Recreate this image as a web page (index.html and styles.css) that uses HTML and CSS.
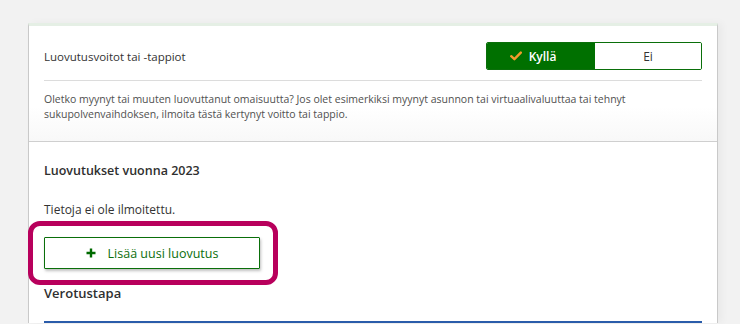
FILE: index.html
```html
<!DOCTYPE html>
<html lang="fi">
<head>
<meta charset="utf-8">
<title>Luovutusvoitot</title>
<link rel="stylesheet" href="styles.css">
</head>
<body>
<div class="card">
  <section class="intro">
    <div class="head-row">
      <span class="title">Luovutusvoitot tai -tappiot</span>
      <div class="toggle">
        <button class="seg seg-on"><svg class="check" width="12" height="10" viewBox="0 0 12 10"><path d="M1.2 5.2 L4.4 8.2 L10.8 1.6" fill="none" stroke="#f39a2c" stroke-width="2.4" stroke-linecap="round" stroke-linejoin="round"/></svg>Kyllä</button>
        <button class="seg seg-off">Ei</button>
      </div>
    </div>
    <p class="desc">Oletko myynyt tai muuten luovuttanut omaisuutta? Jos olet esimerkiksi myynyt asunnon tai virtuaalivaluuttaa tai tehnyt sukupolvenvaihdoksen, ilmoita tästä kertynyt voitto tai tappio.</p>
  </section>
  <section class="list">
    <h2 class="sub">Luovutukset vuonna 2023</h2>
    <p class="empty">Tietoja ei ole ilmoitettu.</p>
    <div class="add-wrap">
      <button class="add"><svg class="plus" width="10" height="10" viewBox="0 0 10 10"><path d="M5 0.5 V9.5 M0.5 5 H9.5" stroke="#006a00" stroke-width="2.4"/></svg>Lisää uusi luovutus</button>
    </div>
    <h2 class="sub sub2">Verotustapa</h2>
    <div class="blue-line"></div>
  </section>
</div>
</body>
</html>
```
FILE: styles.css
```css
html, body {
  margin: 0;
  padding: 0;
  background: #f2f2f2;
  font-family: "Open Sans", "Noto Sans", Arial, sans-serif;
  color: #2b2b2b;
  height: 324px;
  overflow: hidden;
}
.card {
  margin: 23px 0 0 28px;
  width: 690px;
  box-sizing: border-box;
  background: #fff;
  border-left: 1px solid #c9c9c9;
  border-right: 1px solid #c9c9c9;
  border-top: 3px solid #e5efe5;
  box-shadow: 4px 0 8px rgba(0,0,0,0.04);
}
.intro {
  padding: 16px 15px 19px;
  border-bottom: 1px solid #cfcfcf;
  background: linear-gradient(to bottom, #fff 70%, #f8f8f8 100%);
}
.head-row {
  display: flex;
  align-items: center;
  justify-content: space-between;
  padding-bottom: 10px;
  border-bottom: 1px solid #dcdcdc;
}
.title {
  font-size: 11.5px;
  color: #333;
}
.toggle {
  display: flex;
  width: 216px;
  height: 28px;
  border: 1px solid #0a6f0a;
  border-radius: 2px;
  box-sizing: border-box;
  overflow: hidden;
}
.seg {
  flex: 1;
  border: 0;
  margin: 0;
  padding: 0;
  font-family: inherit;
  font-size: 12px;
  display: flex;
  align-items: center;
  justify-content: center;
  gap: 7px;
}
.seg-on {
  background: #007000;
  color: #fff;
  font-weight: 600;
  flex: 0 0 108px;
  padding-right: 16px;
}
.seg-off {
  background: #fff;
  color: #333;
}
.desc {
  margin: 11px 0 0;
  font-size: 10.5px;
  line-height: 15px;
  color: #505050;
}
.list {
  padding: 20px 15px 0;
}
.sub {
  margin: 0;
  font-size: 12.5px;
  font-weight: 600;
  line-height: 18px;
  color: #2f2f2f;
}
.empty {
  margin: 21px 0 0;
  font-size: 12px;
  line-height: 17px;
  color: #333;
}
.add-wrap {
  position: relative;
  width: 216px;
  margin-top: 19px;
}
.add-wrap::after {
  content: "";
  position: absolute;
  left: -16px;
  right: -18px;
  top: -16px;
  bottom: -16px;
  border: 5px solid #b8005c;
  border-radius: 12px;
  pointer-events: none;
}
.add {
  width: 216px;
  height: 32px;
  box-sizing: border-box;
  border: 1px solid #0a6f0a;
  border-radius: 1px;
  background: #fff;
  color: #0b6e0b;
  font-family: inherit;
  font-size: 12.5px;
  display: flex;
  align-items: center;
  justify-content: center;
  gap: 12px;
  box-shadow: 1px 2px 3px rgba(0,0,0,0.25);
  padding: 0;
}
.sub2 {
  margin-top: 15px;
  font-size: 13px;
}
.blue-line {
  margin-top: 19px;
  height: 2px;
  background: #2a5caa;
}
```
